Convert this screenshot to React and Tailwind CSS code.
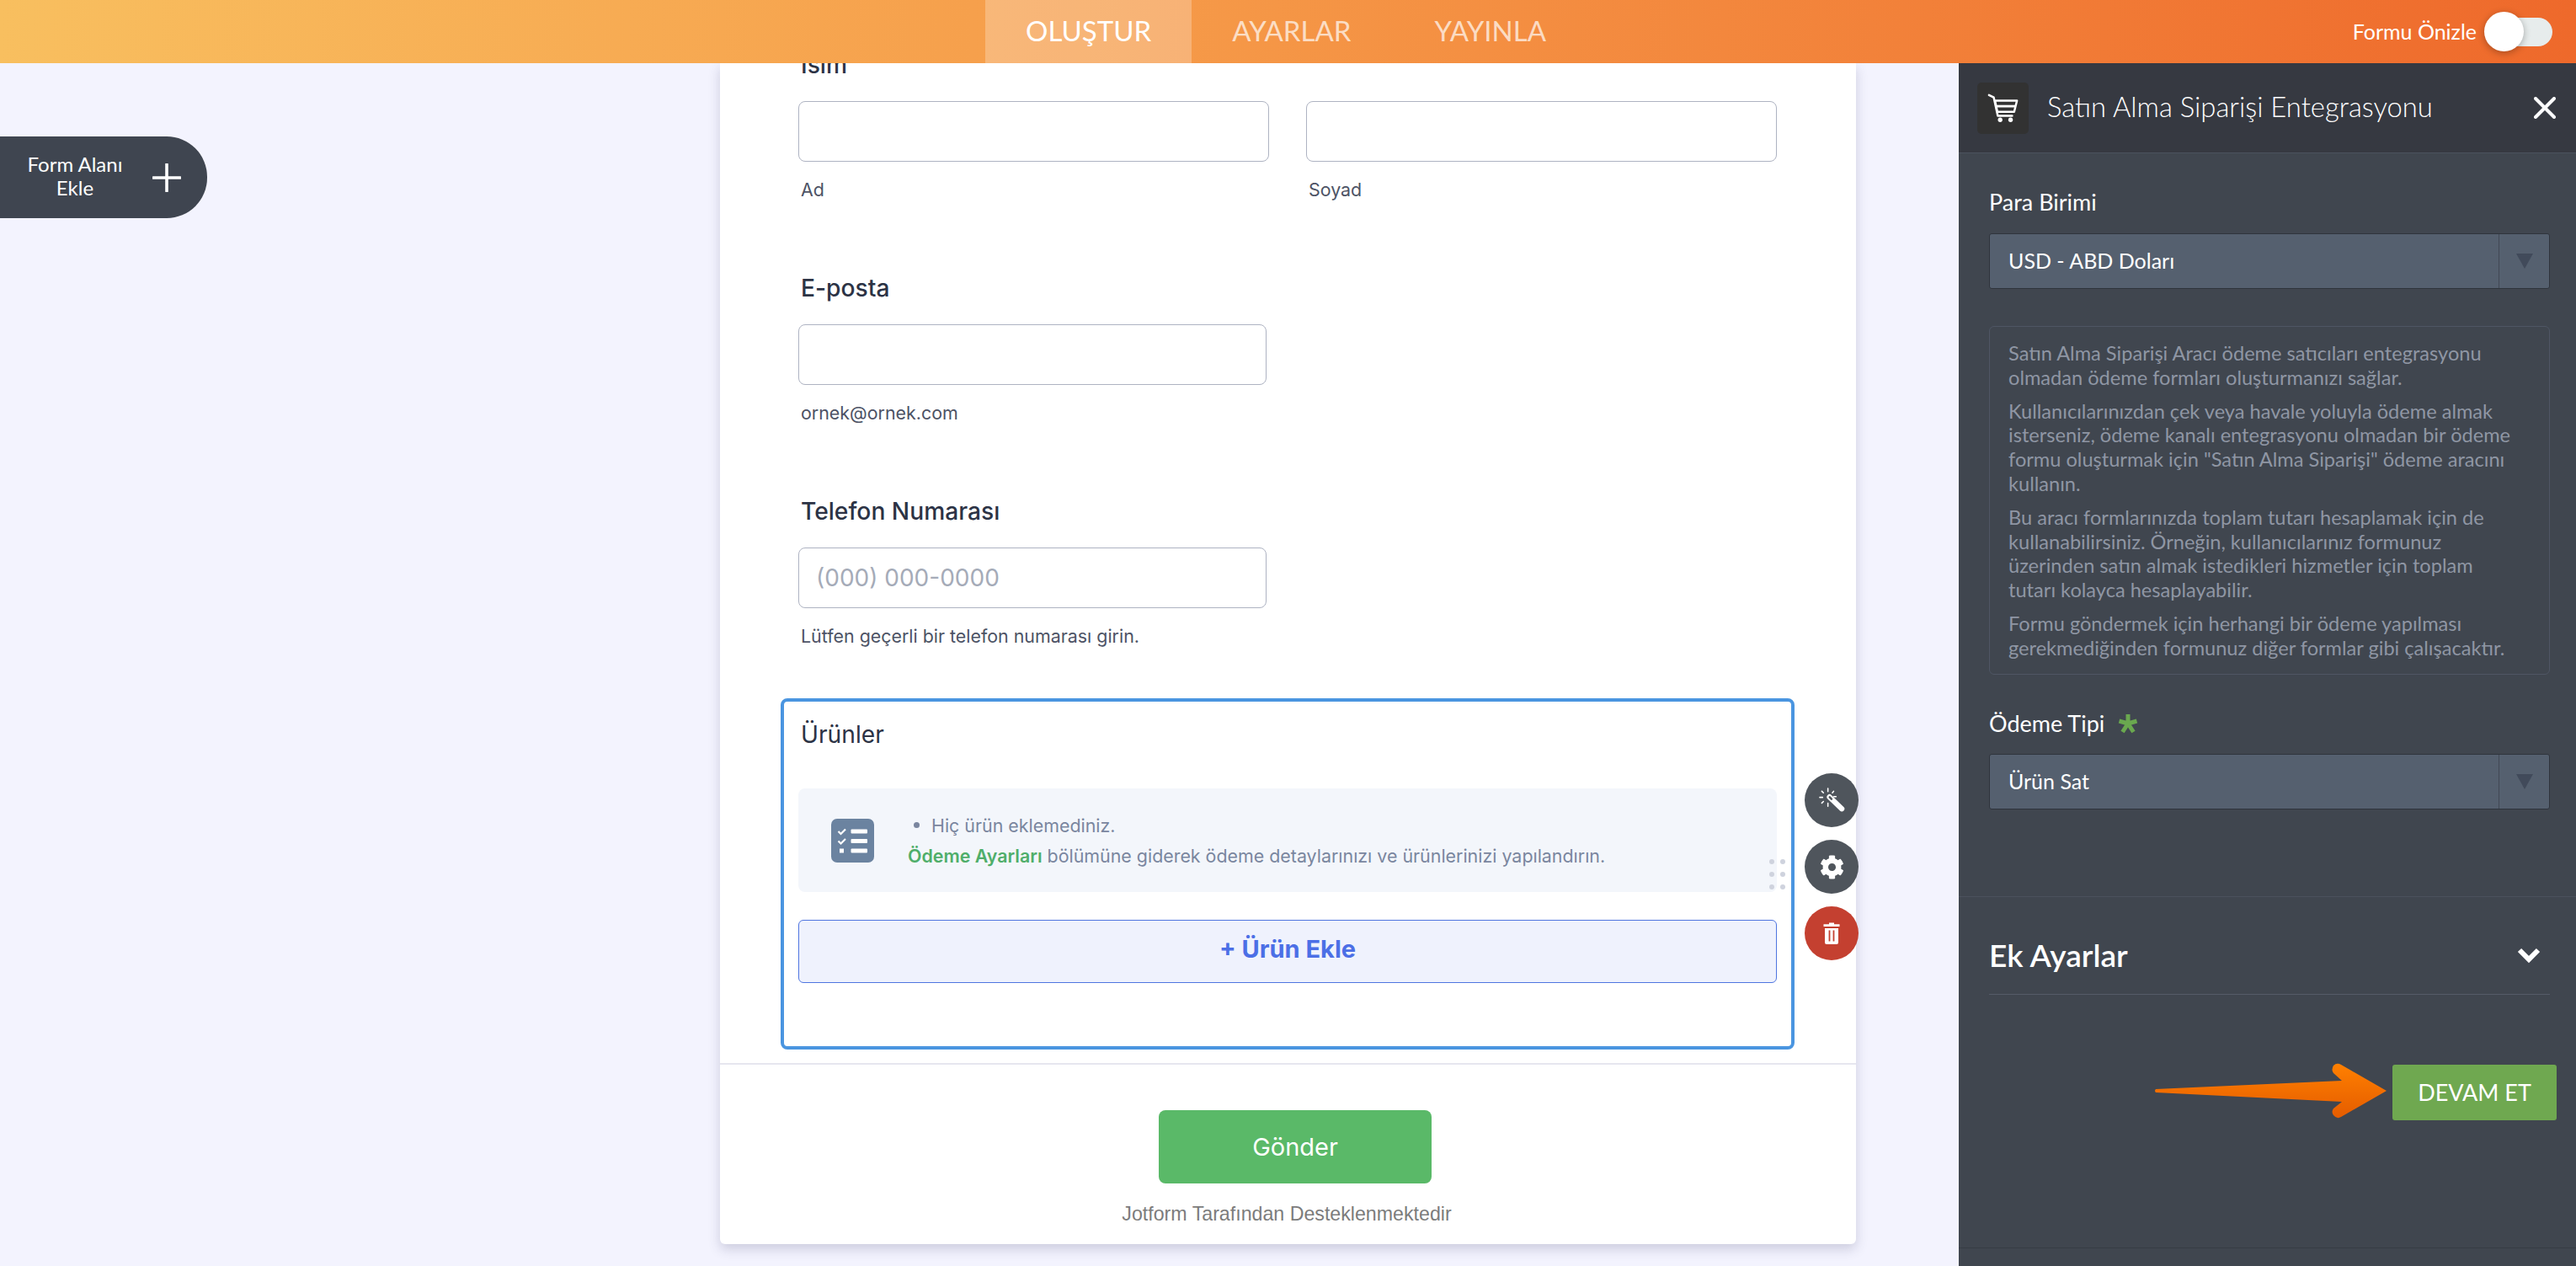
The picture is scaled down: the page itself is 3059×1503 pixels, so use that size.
import React from 'react';
import { FaCog } from 'react-icons/fa';

const CartIcon = () => (
  <svg viewBox="0 0 40 40" className="w-[38px] h-[38px]" fill="none" stroke="#fff">
    <path d="M2 4 L8 7 L13 30 L31 30" strokeWidth="2.6" strokeLinecap="round" strokeLinejoin="round" />
    <path d="M9.5 11 H37 L33.5 25 H12.5 Z" strokeWidth="2.6" strokeLinejoin="round" />
    <path d="M11 18 H35" strokeWidth="3" />
    <circle cx="16" cy="35" r="2.8" fill="#fff" stroke="none" />
    <circle cx="29" cy="35" r="2.8" fill="#fff" stroke="none" />
  </svg>
);

const ChecklistIcon = () => (
  <svg viewBox="0 0 51 52" className="w-[51px] h-[52px]">
    <rect width="51" height="52" rx="7" fill="#6b83a0" />
    <path d="M8.5 15 L11.5 18 L17 12.5" fill="none" stroke="#fff" strokeWidth="2.2" />
    <path d="M8.5 26.5 L11.5 29.5 L17 24" fill="none" stroke="#fff" strokeWidth="2.2" />
    <rect x="10" y="35.5" width="5" height="5" fill="#fff" />
    <rect x="23.5" y="12.5" width="19.5" height="5" rx="1" fill="#fff" />
    <rect x="23.5" y="24" width="19.5" height="5" rx="1" fill="#fff" />
    <rect x="23.5" y="35.5" width="19.5" height="5" rx="1" fill="#fff" />
  </svg>
);

const WandIcon = () => (
  <svg viewBox="0 0 32 32" className="w-[31px] h-[31px]">
    <path d="M13 11.5 L28 26" stroke="#fff" strokeWidth="6.5" strokeLinecap="round" />
    <path d="M13.2 11.8 L15.4 14" stroke="#4f555c" strokeWidth="2.6" strokeLinecap="round" />
    <path d="M11 1 V5 M11 19 V23 M1 12 H4.5 M18 11 H21 M3.5 4.5 L5.5 6.5 M18 4.5 L16.5 6.5 M3.5 19 L5.5 17" stroke="#fff" strokeWidth="1.6" strokeLinecap="round" />
  </svg>
);

const TrashIcon = () => (
  <svg viewBox="0 0 20 26" className="w-[20px] h-[26px]">
    <path d="M7 0.5 H13 V2.2 H19.5 V5 H0.5 V2.2 H7 Z" fill="#fff" />
    <path d="M2 7 H18 V24 Q18 26 16 26 H4 Q2 26 2 24 Z" fill="#fff" />
    <rect x="6.6" y="9.5" width="1.8" height="13" fill="#c44030" />
    <rect x="11.6" y="9.5" width="1.8" height="13" fill="#c44030" />
  </svg>
);

const RequiredStar = () => (
  <svg viewBox="0 0 24 24" className="ml-[16px] h-[24px] w-[24px]">
    <path d="M12 1 V12 M12 12 L1.5 9 M12 12 L22.5 9 M12 12 L5.5 22 M12 12 L18.5 22" stroke="#6aa84f" strokeWidth="5" />
  </svg>
);

const SelectBox = ({ value }) => (
  <div className="flex h-[66px] w-[666px] rounded-[3px] border border-[#2f343c] bg-[#55606f]">
    <div className="flex-1 pl-[22px] text-[25px] leading-[62px] text-white">{value}</div>
    <div className="flex w-[60px] items-center justify-center border-l border-[#414854]">
      <div className="h-0 w-0 border-x-[10px] border-t-[18px] border-x-transparent border-t-[#414a5a]" />
    </div>
  </div>
);

const FieldLabel = ({ children, className = '' }) => (
  <div className={`pl-[3px] text-[28.2px] font-medium leading-[34px] text-[#2c3345] ${className}`}>{children}</div>
);

const Helper = ({ children }) => (
  <div className="mt-[19px] pl-[3px] text-[21.4px] leading-[28px] text-[#4d5365]">{children}</div>
);

const FormInput = ({ width, placeholder }) => (
  <div className={`mt-[26px] h-[72px] rounded-[8px] border border-[#aeb3c2] bg-white pl-[20px] text-[28px] leading-[70px] text-[#a5abb8] ${width}`}>
    {placeholder}
  </div>
);

export default function App() {
  return (
    <div className="flex h-[1503px] w-full flex-col overflow-hidden bg-[#f3f3fe] font-['Inter',sans-serif]">
      <header className="z-20 flex h-[75px] shrink-0 items-stretch bg-linear-to-r from-[#f8bf5f] to-[#ee692b] font-['Lato',sans-serif]">
        <nav className="ml-[1170px] flex text-[33px] leading-[73px]">
          <div className="bg-white/25 px-[48px] text-white">OLUŞTUR</div>
          <div className="pl-[48px] pr-[49px] text-white/70">AYARLAR</div>
          <div className="px-[50px] text-white/70">YAYINLA</div>
        </nav>
        <div className="ml-auto flex items-center pr-[28px]">
          <span className="mr-[9px] text-[25px] text-white">Formu Önizle</span>
          <div className="relative h-[34px] w-[81px]">
            <div className="ml-[10px] h-[34px] w-[71px] rounded-full bg-[#e7ecec]" />
            <div className="absolute left-0 top-[-7px] h-[47px] w-[47px] rounded-full bg-white shadow-[0_2px_8px_rgba(0,0,0,0.3)]" />
          </div>
        </div>
      </header>

      <div className="flex min-h-0 flex-1">
        <div className="w-[855px] shrink-0 pt-[87px]">
          <div className="flex h-[97px] w-[246px] items-center rounded-r-[48px] bg-[#3f4550] font-['Lato',sans-serif] text-white">
            <div className="w-[178px] -translate-y-[2px] text-center text-[24px] leading-[28px]">
              Form Alanı
              <br />
              Ekle
            </div>
            <svg viewBox="0 0 34 34" className="h-[34px] w-[34px] shrink-0 translate-x-[3px]">
              <path d="M17 1 V33 M1 17 H33" stroke="#fff" strokeWidth="3.6" strokeLinecap="round" />
            </svg>
          </div>
        </div>

        <main className="z-10 mb-[26px] h-[1402px] w-[1349px] shrink-0 rounded-b-[6px] bg-white shadow-[0_6px_14px_rgba(70,70,110,0.22)]">
          <div className="-mt-[15px] pl-[93px]">
            <FieldLabel>İsim</FieldLabel>
            <div className="flex gap-[44px]">
              <div>
                <FormInput width="w-[559px]" />
                <Helper>Ad</Helper>
              </div>
              <div>
                <FormInput width="w-[559px]" />
                <Helper>Soyad</Helper>
              </div>
            </div>

            <FieldLabel className="mt-[86px]">E-posta</FieldLabel>
            <FormInput width="w-[556px]" />
            <Helper>ornek@ornek.com</Helper>

            <FieldLabel className="mt-[86px]">Telefon Numarası</FieldLabel>
            <FormInput width="w-[556px] mt-[25px]" placeholder="(000) 000-0000" />
            <Helper>Lütfen geçerli bir telefon numarası girin.</Helper>
          </div>

          <section className="relative ml-[72px] mt-[60px] h-[417px] w-[1204px] rounded-[8px] border-4 border-[#4a95e0] px-[17px] pt-[22px]">
            <FieldLabel className="font-normal">Ürünler</FieldLabel>
            <div className="mt-[47px] flex h-[123px] items-center rounded-[8px] bg-[#f3f6fb] pl-[39px] text-[21.4px] text-[#7a869f]">
              <ChecklistIcon />
              <div className="ml-[40px]">
                <div className="flex items-center pl-[7px] leading-[28px]">
                  <span className="mr-[14px] h-[7px] w-[7px] rounded-full bg-[#7a869f]" />
                  Hiç ürün eklemediniz.
                </div>
                <div className="mt-[8px] leading-[28px]">
                  <span className="font-semibold text-[#4fae6a]">Ödeme Ayarları</span> bölümüne giderek ödeme detaylarınızı ve ürünlerinizi yapılandırın.
                </div>
              </div>
            </div>
            <div className="mt-[33px] flex h-[75px] items-center justify-center rounded-[6px] border border-[#4f75e0] bg-[#eff2fd] pb-[6px] text-[29px] font-bold text-[#4c6fe6]">
              + Ürün Ekle
            </div>

            <div className="absolute left-[1170px] top-[187px] grid grid-cols-2 gap-x-[7px] gap-y-[9px]">
              {[0, 1, 2, 3, 4, 5].map((i) => (
                <span key={i} className="h-[6px] w-[6px] rounded-full bg-[#cfd3de]" />
              ))}
            </div>

            <div className="absolute left-[1212px] top-[85px] flex flex-col gap-[15px]">
              <div className="flex h-[64px] w-[64px] items-center justify-center rounded-full bg-[#4f555c]"><WandIcon /></div>
              <div className="flex h-[64px] w-[64px] items-center justify-center rounded-full bg-[#4f555c] text-[29px] text-white"><FaCog /></div>
              <div className="flex h-[64px] w-[64px] items-center justify-center rounded-full bg-[#c44030]"><TrashIcon /></div>
            </div>
          </section>

          <div className="mt-[16px] border-t-2 border-[#e6e6ef] pt-[54px]">
            <div className="ml-[521px] flex h-[87px] w-[324px] items-center justify-center rounded-[8px] bg-[#5ab968] text-[29px] text-white">
              Gönder
            </div>
            <div className="mt-[22px] pr-[3px] text-center font-['Liberation_Sans',sans-serif] text-[23.2px] leading-[28px] text-[#7c7c7c]">
              Jotform Tarafından Desteklenmektedir
            </div>
          </div>
        </main>

        <div className="flex-1" />

        <aside className="relative z-20 h-full w-[733px] shrink-0 bg-[#40464f] font-['Lato',sans-serif] text-white">
          <div className="flex h-[107px] items-center border-b border-[#4c525e] bg-[#363941] pl-[22px] pr-[24px]">
            <div className="flex h-[61px] w-[61px] items-center justify-center rounded-[5px] bg-[#323232]"><CartIcon /></div>
            <div className="ml-[22px] -translate-y-[1px] text-[32.8px] font-light">Satın Alma Siparişi Entegrasyonu</div>
            <svg viewBox="0 0 26 26" className="ml-auto h-[26px] w-[26px]">
              <path d="M2 2 L24 24 M24 2 L2 24" stroke="#fff" strokeWidth="4" strokeLinecap="round" />
            </svg>
          </div>

          <div className="px-[36px]">
            <div className="mt-[41px] text-[27px] leading-[34px]">Para Birimi</div>
            <div className="mt-[20px]"><SelectBox value="USD - ABD Doları" /></div>

            <div className="mt-[44px] h-[414px] w-[666px] whitespace-nowrap rounded-[6px] border border-[#4f5664] pl-[22px] pt-[17px] text-[23.6px] leading-[28.8px] text-[#8f96a4]">
              <p className="mb-[11px]">Satın Alma Siparişi Aracı ödeme satıcıları entegrasyonu<br />olmadan ödeme formları oluşturmanızı sağlar.</p>
              <p className="mb-[11px]">Kullanıcılarınızdan çek veya havale yoluyla ödeme almak<br />isterseniz, ödeme kanalı entegrasyonu olmadan bir ödeme<br />formu oluşturmak için "Satın Alma Siparişi" ödeme aracını<br />kullanın.</p>
              <p className="mb-[11px]">Bu aracı formlarınızda toplam tutarı hesaplamak için de<br />kullanabilirsiniz. Örneğin, kullanıcılarınız formunuz<br />üzerinden satın almak istedikleri hizmetler için toplam<br />tutarı kolayca hesaplayabilir.</p>
              <p>Formu göndermek için herhangi bir ödeme yapılması<br />gerekmediğinden formunuz diğer formlar gibi çalışacaktır.</p>
            </div>

            <div className="mt-[41px] flex items-center text-[27px] leading-[34px]">
              Ödeme Tipi
              <RequiredStar />
            </div>
            <div className="mt-[19px]"><SelectBox value="Ürün Sat" /></div>
          </div>

          <div className="mt-[103px] border-t border-[#4b515c] px-[36px] pt-[49px]">
            <div className="flex h-[40px] w-[666px] items-center justify-between pr-[11px] text-[37px] font-semibold leading-[40px]">
              Ek Ayarlar
              <svg viewBox="0 0 28 20" className="h-[20px] w-[28px]">
                <path d="M3 4 L14 15 L25 4" fill="none" stroke="#fff" strokeWidth="6" />
              </svg>
            </div>
            <div className="mt-[26px] w-[666px] border-t border-[#555b68]" />
          </div>

          <div className="ml-[515px] mt-[83px] flex h-[66px] w-[195px] items-center justify-center rounded-[3px] bg-[#6fa850] text-[27px]">
            DEVAM ET
          </div>
          <div className="mt-[151px] border-t border-[#363c44]" />

          <svg viewBox="0 0 276 66" className="absolute left-[233px] top-[1187px] h-[66px] w-[276px]">
            <defs>
              <linearGradient id="arrowFill" x1="0" y1="0" x2="0" y2="1">
                <stop offset="0" stopColor="#ff8000" />
                <stop offset="1" stopColor="#e55c00" />
              </linearGradient>
            </defs>
            <path d="M1 31 L222 21 L212 12 Q209 8 212 3 Q216 -1 221 2 L275 33 L221 64 Q216 67 212 62 Q209 58 212 54 L222 46 L1 35 Q-1 33 1 31 Z" fill="url(#arrowFill)" />
          </svg>
        </aside>
      </div>
    </div>
  );
}
